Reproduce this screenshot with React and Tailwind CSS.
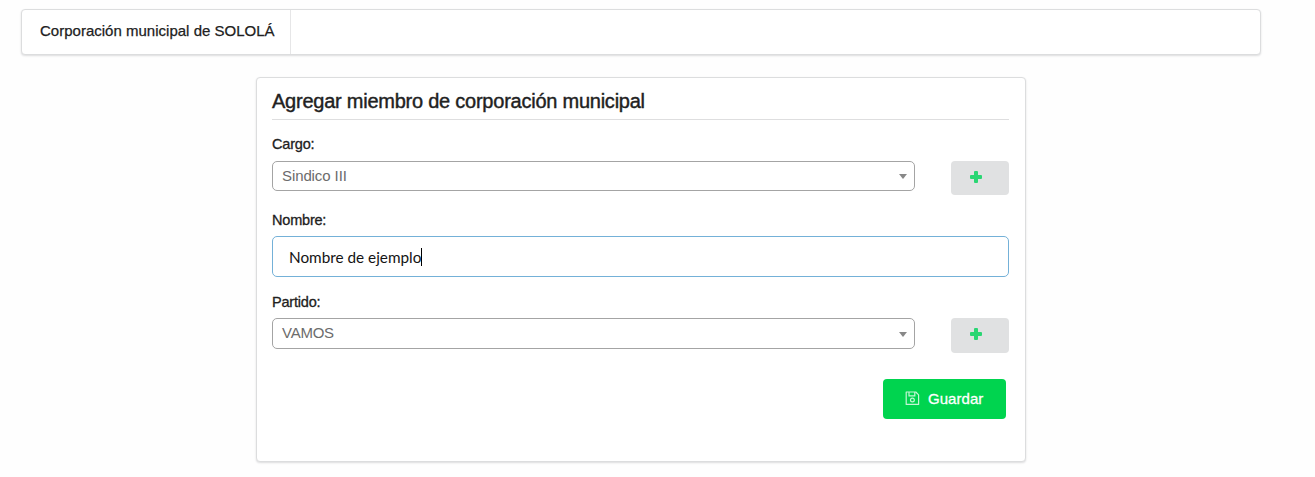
import React from "react";

function Label({ children, className }) {
  return (
    <label className={`block h-5 text-[14.5px] leading-5 text-[#212121] [-webkit-text-stroke:0.3px_#212121] ${className}`}>
      {children}
    </label>
  );
}

function Select({ value, className, textClass }) {
  return (
    <div className={`flex w-[643px] items-center justify-between rounded-[5px] border border-[#a4a4a4] bg-white pr-[7px] pl-[9px] ${className}`}>
      <span className={`-mt-px text-[15px] leading-7 text-[#6c6c6c] ${textClass}`}>{value}</span>
      <svg width="8" height="5" viewBox="0 0 8 5" className="mt-px">
        <path d="M0 0h8L4 5z" fill="#888" />
      </svg>
    </div>
  );
}

function AddButton({ className }) {
  return (
    <button className={`flex w-[58px] justify-center rounded-[4px] bg-[#e0e1e2] pt-[10px] pr-2 ${className}`}>
      <svg width="12" height="12" viewBox="0 0 12 12">
        <path
          d="M5 0h2q1 0 1 1v3h3q1 0 1 1v2q0 1-1 1H8v3q0 1-1 1H5q-1 0-1-1V8H1q-1 0-1-1V5q0-1 1-1h3V1q0-1 1-1z"
          fill="#2ad673"
        />
      </svg>
    </button>
  );
}

function SaveIcon() {
  return (
    <svg width="15" height="15" viewBox="0 0 15 15" fill="none" stroke="#c4f5d5" strokeWidth="1.2" className="-mt-px">
      <path d="M1.2 1h9.6L13.6 3.8v9.6H1.2z" strokeLinejoin="round" />
      <path d="M4 1v3.8h5.8V1" />
      <circle cx="7.4" cy="9" r="1.9" />
    </svg>
  );
}

export default function App() {
  return (
    <div className="h-[477px] w-[1315px] overflow-hidden bg-[#fefefe] pt-[9px] pl-[21px] font-['Liberation_Sans',sans-serif]">
      <nav className="flex h-[46px] w-[1240px] rounded-[4px] border border-[#dcddde] bg-white shadow-[0_1px_2px_0_rgba(34,36,38,0.15)]">
        <div className="w-[269px] border-r border-[#e6e6e7] pt-[11px] pl-[18px] text-[15px] leading-5 tracking-[0.01px] whitespace-nowrap text-[#212121] [-webkit-text-stroke:0.25px_#212121]">
          Corporación municipal de SOLOLÁ
        </div>
      </nav>

      <main className="mt-[22px] ml-[235px] h-[385px] w-[770px] rounded-[4px] border border-[#dcddde] bg-white px-[15px] pt-[9px] shadow-[0_1px_2px_0_rgba(34,36,38,0.15)]">
        <h1 className="h-[33px] w-[737px] border-b border-[#dededf] text-[20px] leading-7 tracking-[-0.24px] whitespace-nowrap text-[#212121] [-webkit-text-stroke:0.4px_#212121]">
          Agregar miembro de corporación municipal
        </h1>

        <Label className="mt-[14px] tracking-[-0.2px]">Cargo:</Label>
        <div className="mt-[7px] flex h-[34px] w-[737px] items-start justify-between">
          <Select value="Sindico III" className="h-[30px]" textClass="tracking-[-0.1px]" />
          <AddButton className="h-[34px]" />
        </div>

        <Label className="mt-[15px] tracking-[-0.2px]">Nombre:</Label>
        <div className="mt-[6px] flex h-[41px] w-[737px] items-center rounded-[5px] border border-[#74b1d8] bg-white pl-4">
          <span className="mt-px [font-family:Lato,Carlito,sans-serif] text-[15.3px] leading-5 text-[#141414]">Nombre de ejemplo</span>
          <span className="h-[18px] w-px bg-black" />
        </div>

        <Label className="mt-[15px] tracking-[-0.2px]">Partido:</Label>
        <div className="mt-[6px] flex h-[35px] w-[737px] items-start justify-between">
          <Select value="VAMOS" className="h-[31px]" textClass="tracking-[-0.25px]" />
          <AddButton className="h-[35px]" />
        </div>

        <div className="mt-[26px] flex w-[734px] justify-end">
          <button className="flex h-10 w-[123px] items-center rounded-[4px] bg-[#00d44f] pl-[22px] text-white">
            <SaveIcon />
            <span className="ml-2 text-[15px] leading-5 tracking-[0.05px] [-webkit-text-stroke:0.3px_white]">Guardar</span>
          </button>
        </div>
      </main>
    </div>
  );
}
